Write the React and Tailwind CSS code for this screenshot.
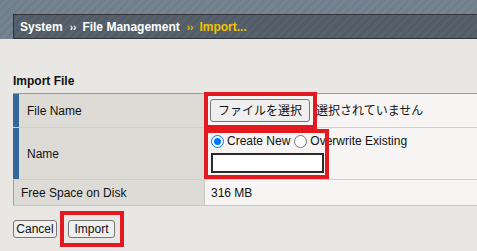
export default function App() {
  return (
    <div className="relative w-[477px] h-[251px] overflow-hidden bg-[#e9e7e3] font-['Liberation_Sans','Noto_Sans_CJK_JP',sans-serif] text-[12px] text-[#111]">
      <div className="h-[39px] pl-[13px] pt-[14px] bg-[repeating-linear-gradient(135deg,#6f7d8c_0px,#6f7d8c_3px,#76848f_3px,#76848f_6px)]">
        <div className="h-[25px] border-y border-l border-[#30353b] bg-[repeating-linear-gradient(135deg,#515c67_0px,#515c67_3px,#57626d_3px,#57626d_6px)] flex items-center pl-[6px] font-bold text-white text-[12px] leading-none">
          <span>System</span>
          <span className="ml-[7px] mr-[6px] text-[10px] mt-[2px]">››</span>
          <span>File Management</span>
          <span className="ml-[7px] mr-[6px] text-[10px] mt-[2px] text-[#f2c200]">››</span>
          <span className="text-[#f2c200]">Import...</span>
        </div>
      </div>

      <div className="pl-[13px]">
        <div className="mt-[35px] h-[14px] leading-[14px] font-bold">Import File</div>
        <div className="mt-[5px] border-t border-[#9a9a9a]">
          <div className="flex h-[34px] border-b border-[#d0ceca]">
            <div className="w-[191px] bg-[#dddbd6] border-l-[6px] border-[#35689a] pl-[8px] flex items-center">File Name</div>
            <div className="flex-1 bg-[#f6f5f3] border-l border-[#c8c6c2] pl-[5px] flex items-center">
              <div className="w-[100px] h-[23px] border border-[#767676] rounded-[3px] bg-[#efefef] flex items-center justify-center">ファイルを選択</div>
              <span className="ml-[6px]">選択されていません</span>
            </div>
          </div>
          <div className="flex h-[52px] border-b border-[#d0ceca]">
            <div className="w-[191px] bg-[#dddbd6] border-l-[6px] border-[#35689a] pl-[8px] flex items-center">Name</div>
            <div className="flex-1 bg-[#f6f5f3] border-l border-[#c8c6c2] pl-[6px] pt-[6px]">
              <div className="h-[14px] flex items-center">
                <span className="w-[13px] h-[13px] rounded-full border-[1.5px] border-[#0075ff] bg-white flex items-center justify-center">
                  <span className="w-[7px] h-[7px] rounded-full bg-[#0075ff]"></span>
                </span>
                <span className="ml-[3px]">Create New</span>
                <span className="ml-[4px] w-[13px] h-[13px] rounded-full border border-[#767676] bg-white"></span>
                <span className="ml-[3px]">Overwrite Existing</span>
              </div>
              <div className="mt-[5px] w-[113px] h-[20px] border-2 border-[#2b2b2b] bg-white"></div>
            </div>
          </div>
          <div className="flex h-[26px] border-b border-[#c8c6c2]">
            <div className="w-[191px] bg-[#dddbd6] border-l border-[#a0a0a0] pl-[7px] flex items-center">Free Space on Disk</div>
            <div className="flex-1 bg-[#f6f5f3] border-l border-[#c8c6c2] pl-[6px] flex items-center">316 MB</div>
          </div>
        </div>
        <div className="mt-[14px] flex">
          <div className="w-[44px] h-[18px] border border-[#767676] rounded-[3px] bg-[#efefef] flex items-center justify-center">Cancel</div>
          <div className="ml-[11px] w-[47px] h-[18px] border border-[#767676] rounded-[3px] bg-[#efefef] flex items-center justify-center">Import</div>
        </div>
      </div>

      <div className="absolute left-[204px] top-[92px] w-[113px] h-[37px] border-4 border-[#e3191f]"></div>
      <div className="absolute left-[204px] top-[129px] w-[125px] h-[50px] border-4 border-[#e3191f]"></div>
      <div className="absolute left-[60px] top-[211px] w-[64px] h-[36px] border-4 border-[#e3191f]"></div>
    </div>
  );
}
